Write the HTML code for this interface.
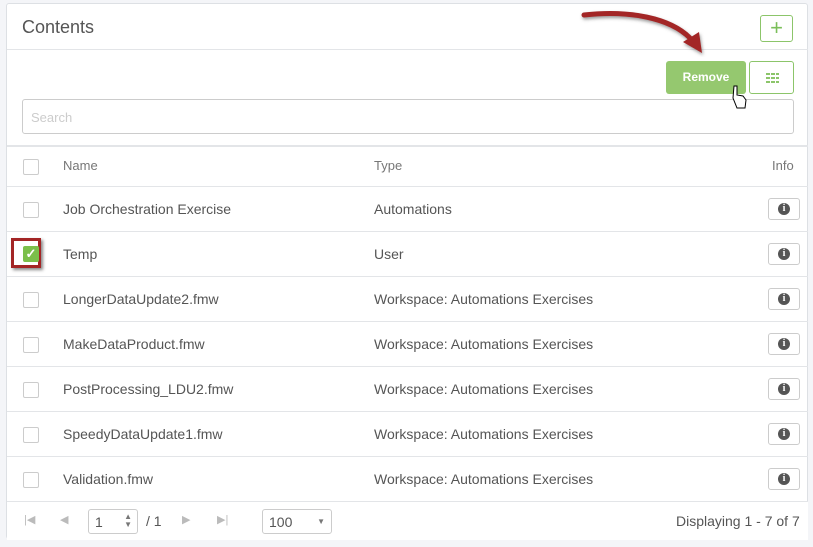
<!DOCTYPE html>
<html><head><style>
body{margin:0;width:813px;height:547px;background:#f4f5f8;font-family:"Liberation Sans",sans-serif;position:relative;overflow:hidden}
.panel{position:absolute;left:6px;top:3px;width:802px;height:536px;background:#fff;border:1px solid #dde0e4;border-radius:3px;box-sizing:border-box}
.a{position:absolute}
.t{color:#555;font-size:14px}
.cb{position:absolute;left:16px;width:14px;height:14px;border:1px solid #ccc;border-radius:2px;background:#fff}
.row{position:absolute;left:0;width:801px;height:45px;border-top:1px solid #e3e5e8}
.info{position:absolute;left:761px;top:11px;width:32px;height:22px;border:1px solid #ccc;border-radius:3px;box-sizing:border-box;background:#fff}
.info i{position:absolute;left:9px;top:4px;width:12px;height:12px;border-radius:50%;background:#555;color:#fff;font-size:10px;font-weight:bold;font-style:normal;text-align:center;line-height:12px;font-family:"Liberation Serif",serif}
</style></head><body>
<div class="panel">
<div class="a" style="left:15px;top:13px;font-size:18px;color:#555">Contents</div>
<div class="a" style="left:753px;top:11px;width:33px;height:27px;border:1px solid #8cc56a;border-radius:3px;box-sizing:border-box;color:#7bbf5a;font-size:22px;text-align:center;line-height:24px">+</div>
<div class="a" style="left:0;top:45px;width:801px;border-top:1px solid #e3e5e8"></div>
<div class="a" style="left:659px;top:57px;width:80px;height:33px;background:#95c86f;border-radius:3px;color:#fff;font-weight:bold;font-size:12px;text-align:center;line-height:33px">Remove</div>
<div class="a" style="left:742px;top:57px;width:45px;height:33px;border:1px solid #8cc56a;border-radius:3px;box-sizing:border-box"><svg width="43" height="31"><g fill="#8cc56a"><rect x="16" y="11" width="4" height="2"/><rect x="21" y="11" width="4" height="2"/><rect x="16" y="15" width="4" height="2"/><rect x="21" y="15" width="4" height="2"/><rect x="16" y="19" width="4" height="2"/><rect x="21" y="19" width="4" height="2"/><rect x="26" y="11" width="3" height="2"/><rect x="26" y="15" width="3" height="2"/><rect x="26" y="19" width="3" height="2"/></g></svg></div>
<div class="a" style="left:15px;top:95px;width:772px;height:35px;border:1px solid #ccc;border-radius:3px;box-sizing:border-box;color:#ccc;font-size:13px;padding:10px 8px">Search</div>
<div class="a" style="left:0;top:141px;width:801px;border-top:2px solid #e3e5e8"></div>
<div class="cb" style="top:155px"></div>
<div class="a t" style="left:56px;top:154px;color:#777;font-size:13px">Name</div>
<div class="a t" style="left:367px;top:154px;color:#777;font-size:13px">Type</div>
<div class="a t" style="left:765px;top:154px;color:#777;font-size:13px">Info</div>

<div class="row" style="top:182px"><div class="cb" style="top:15px"></div><div class="a t" style="left:56px;top:14px">Job Orchestration Exercise</div><div class="a t" style="left:367px;top:14px">Automations</div><div class="info"><i>i</i></div></div>
<div class="row" style="top:227px"><div class="a" style="left:4px;top:6px;width:30px;height:30px;border:3px solid #a32525;box-sizing:border-box;box-shadow:2px 2px 3px #888"></div><div class="a" style="left:16px;top:14px;width:16px;height:16px;background:#7bbf4a;border-radius:2px;color:#fff;font-size:13px;text-align:center;line-height:16px;font-weight:bold">✓</div><div class="a t" style="left:56px;top:14px">Temp</div><div class="a t" style="left:367px;top:14px">User</div><div class="info"><i>i</i></div></div>
<div class="row" style="top:272px"><div class="cb" style="top:15px"></div><div class="a t" style="left:56px;top:14px">LongerDataUpdate2.fmw</div><div class="a t" style="left:367px;top:14px">Workspace: Automations Exercises</div><div class="info"><i>i</i></div></div>
<div class="row" style="top:317px"><div class="cb" style="top:15px"></div><div class="a t" style="left:56px;top:14px">MakeDataProduct.fmw</div><div class="a t" style="left:367px;top:14px">Workspace: Automations Exercises</div><div class="info"><i>i</i></div></div>
<div class="row" style="top:362px"><div class="cb" style="top:15px"></div><div class="a t" style="left:56px;top:14px">PostProcessing_LDU2.fmw</div><div class="a t" style="left:367px;top:14px">Workspace: Automations Exercises</div><div class="info"><i>i</i></div></div>
<div class="row" style="top:407px"><div class="cb" style="top:15px"></div><div class="a t" style="left:56px;top:14px">SpeedyDataUpdate1.fmw</div><div class="a t" style="left:367px;top:14px">Workspace: Automations Exercises</div><div class="info"><i>i</i></div></div>
<div class="row" style="top:452px"><div class="cb" style="top:15px"></div><div class="a t" style="left:56px;top:14px">Validation.fmw</div><div class="a t" style="left:367px;top:14px">Workspace: Automations Exercises</div><div class="info"><i>i</i></div></div>
<div class="row" style="top:497px;height:38px;background:#fff">
<div class="a" style="left:17px;top:11px;color:#bbb;font-size:11px">|◀</div>
<div class="a" style="left:53px;top:11px;color:#bbb;font-size:11px">◀</div>
<div class="a" style="left:81px;top:7px;width:50px;height:25px;border:1px solid #ccc;border-radius:3px;box-sizing:border-box;font-size:14px;color:#555;padding:4px 6px">1<span style="position:absolute;right:5px;top:3px;font-size:8px;line-height:8px;color:#777">▲<br>▼</span></div>
<div class="a t" style="left:139px;top:11px">/ 1</div>
<div class="a" style="left:175px;top:11px;color:#bbb;font-size:11px">▶</div>
<div class="a" style="left:210px;top:11px;color:#bbb;font-size:11px">▶|</div>
<div class="a" style="left:255px;top:7px;width:70px;height:25px;border:1px solid #ccc;border-radius:3px;box-sizing:border-box;font-size:14px;color:#555;padding:4px 6px">100<span style="position:absolute;right:6px;top:7px;font-size:8px;color:#777">▼</span></div>
<div class="a t" style="left:669px;top:11px">Displaying 1 - 7 of 7</div>
</div>
</div>
<svg class="a" style="left:0;top:0" width="813" height="547">
<defs><filter id="s"><feDropShadow dx="1" dy="2" stdDeviation="1.5" flood-color="#555" flood-opacity="0.6"/></filter></defs>
<g filter="url(#s)">
<path d="M584 15 C630 10 670 18 690 38" stroke="#a32525" stroke-width="5" fill="none" stroke-linecap="round"/>
<path d="M683 42 L702 53 L699 32 Z" fill="#a32525"/>
</g>
<path d="M734 86 L737 86 L737 95 L743 96 L746 100 L745 108 L737 108 L733 98 Z" fill="#fff" stroke="#000" stroke-width="1"/>
</svg>
</body></html>
